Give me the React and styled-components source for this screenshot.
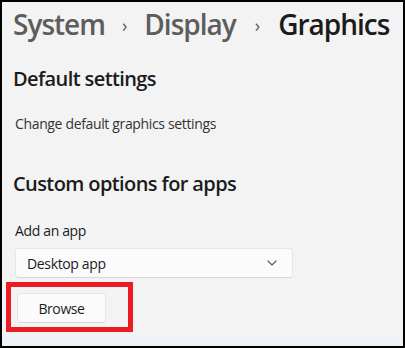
import React from "react";
import styled, { createGlobalStyle } from "styled-components";

const Global = createGlobalStyle`
  html, body { margin: 0; padding: 0; background: #ffffff; }
  * { box-sizing: border-box; }
`;

const Frame = styled.div`
  width: 405px;
  height: 348px;
  border: 2px solid #000;
  display: flex;
  flex-direction: column;
  font-family: "Open Sans", "Noto Sans", sans-serif;
  overflow: hidden;
`;

const Main = styled.div`
  flex: 1;
  background: #f3f3f3;
  padding: 0 0 0 11px;
  display: flex;
  flex-direction: column;
  align-items: flex-start;
`;

const BottomStrip = styled.div`
  height: 9px;
  background: #eef1f8;
`;

const Breadcrumb = styled.div`
  display: flex;
  align-items: baseline;
  height: 44px;
  line-height: 44px;
  font-size: 28px;
  font-weight: 600;
  letter-spacing: -1px;
  white-space: nowrap;
`;

const Crumb = styled.span`
  color: ${(p) => (p.$current ? "#1b1b1b" : "#5d5d5d")};
`;

const Sep = styled.span`
  color: #5d5d5d;
  font-size: 18px;
  font-weight: 400;
  letter-spacing: 0;
  margin: 0 ${(p) => p.$r}px 0 ${(p) => p.$l}px;
  position: relative;
  top: -3px;
`;

const Heading = styled.h2`
  margin: ${(p) => p.$mt}px 0 0 0;
  font-size: 20px;
  line-height: 28px;
  font-weight: 600;
  letter-spacing: -0.6px;
  color: #1b1b1b;
`;

const Text = styled.div`
  margin: ${(p) => p.$mt}px 0 0 ${(p) => p.$ml || 0}px;
  font-size: 14px;
  line-height: 20px;
  letter-spacing: -0.35px;
  color: ${(p) => p.$color || "#1b1b1b"};
`;

const Select = styled.div`
  margin: 7px 0 0 2px;
  width: 278px;
  height: 30px;
  background: #fbfbfb;
  border: 1px solid #e6e6e6;
  border-bottom-color: #d6d6d6;
  border-radius: 4px;
  display: flex;
  align-items: center;
  justify-content: space-between;
  padding: 0 15px 0 11px;
  font-size: 14px;
  letter-spacing: -0.35px;
  color: #1b1b1b;
`;

const Highlight = styled.div`
  margin: 4px 0 0 -7px;
  width: 127px;
  height: 50px;
  border: 5px solid #ed1c24;
  padding: 6px 0 0 6px;
`;

const Button = styled.button`
  width: 89px;
  height: 30px;
  background: #fbfbfb;
  border: 1px solid #e6e6e6;
  border-bottom-color: #d4d4d4;
  border-radius: 4px;
  font-family: inherit;
  font-size: 14px;
  letter-spacing: -0.4px;
  color: #1b1b1b;
  padding: 0;
  cursor: pointer;
`;

const Chevron = () => (
  <svg width="10" height="6" viewBox="0 0 10 6" fill="none">
    <path d="M1 1 L5 5 L9 1" stroke="#5f5f5f" strokeWidth="1.2" strokeLinecap="round" strokeLinejoin="round" />
  </svg>
);

export default function App() {
  return (
    <>
      <Global />
      <Frame>
        <Main>
          <Breadcrumb>
            <Crumb>System</Crumb>
            <Sep $l={17} $r={17}>›</Sep>
            <Crumb>Display</Crumb>
            <Sep $l={19} $r={18}>›</Sep>
            <Crumb $current>Graphics</Crumb>
          </Breadcrumb>
          <Heading $mt={19}>Default settings</Heading>
          <Text $mt={21} $ml={2} $color="#333">Change default graphics settings</Text>
          <Heading $mt={36}>Custom options for apps</Heading>
          <Text $mt={23} $ml={2}>Add an app</Text>
          <Select>
            <span>Desktop app</span>
            <Chevron />
          </Select>
          <Highlight>
            <Button>Browse</Button>
          </Highlight>
        </Main>
        <BottomStrip />
      </Frame>
    </>
  );
}
